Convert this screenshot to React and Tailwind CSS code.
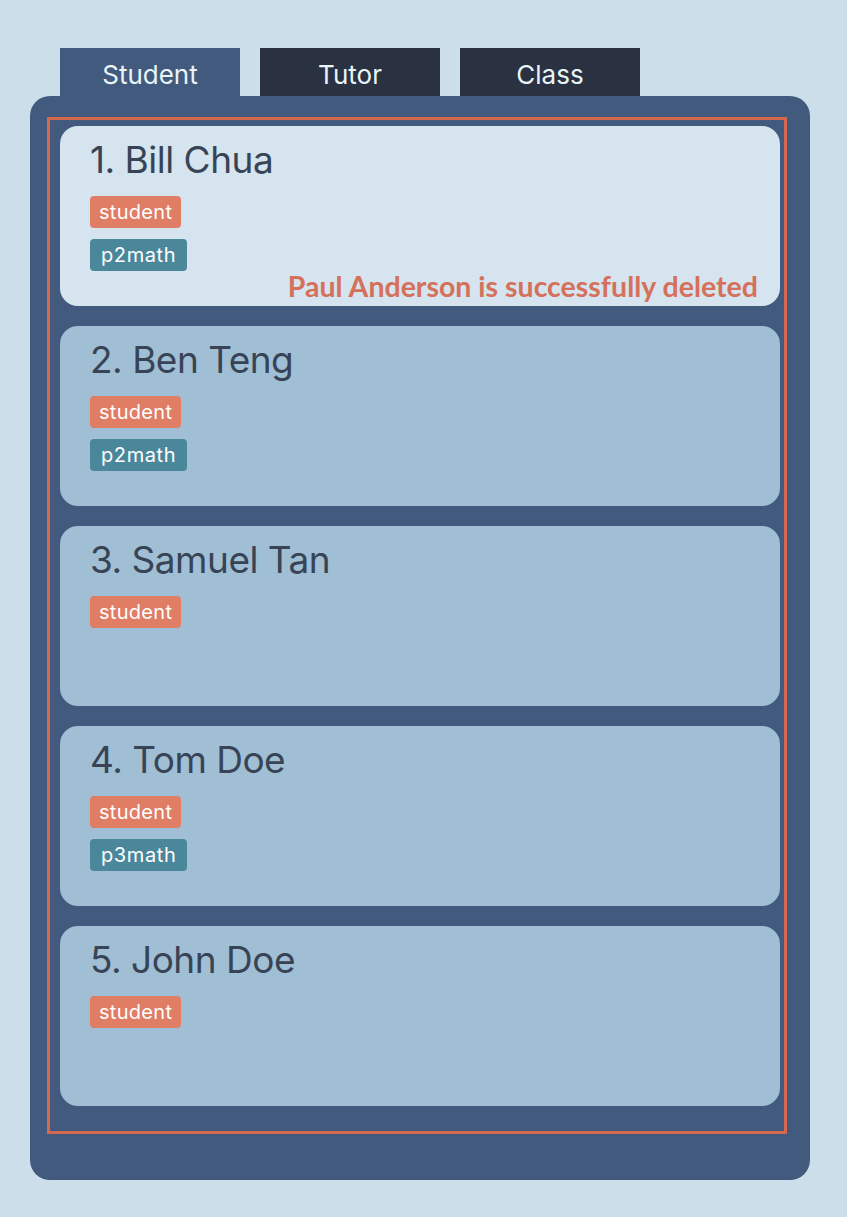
import React from "react";

const people = [
  { name: "1. Bill Chua", tags: ["p2math"], selected: true },
  { name: "2. Ben Teng", tags: ["p2math"] },
  { name: "3. Samuel Tan", tags: [] },
  { name: "4. Tom Doe", tags: ["p3math"] },
  { name: "5. John Doe", tags: [] },
];

function Card({ p }) {
  return (
    <div
      className={`relative h-[180px] rounded-[18px] pl-[30px] pt-[12px] ${
        p.selected ? "bg-[#d5e4ee]" : "bg-[#a0bfd4]"
      }`}
    >
      <div className="text-[37px] leading-[44px] text-[#384456] tracking-[-0.5px]">{p.name}</div>
      <div className="mt-[14px] flex flex-col items-start gap-[11px]">
        <span className="h-[32px] rounded-[4px] bg-[#e07d65] px-[9px] text-[20px] leading-[32px] tracking-[0.3px] text-white">
          student
        </span>
        {p.tags.map((t) => (
          <span
            key={t}
            className="h-[32px] rounded-[4px] bg-[#4b879b] px-[11px] text-[20px] leading-[32px] tracking-[0.6px] text-white"
          >
            {t}
          </span>
        ))}
      </div>
      {p.selected && (
        <div
          className="absolute right-[22px] bottom-[3px] text-[28.5px] font-bold leading-[34px] text-[#d5705a]"
          style={{ fontFamily: "Lato, sans-serif" }}
        >
          Paul Anderson is successfully deleted
        </div>
      )}
    </div>
  );
}

export default function App() {
  return (
    <div
      className="min-h-[1217px] w-full bg-[#cbdeea] pl-[30px] pr-[37px] pt-[48px]"
      style={{ fontFamily: "Inter, 'Noto Sans', sans-serif" }}
    >
      <div className="flex gap-[20px] pl-[30px]">
        {["Student", "Tutor", "Class"].map((t, i) => (
          <div
            key={t}
            className={`flex h-[48px] w-[180px] items-center justify-center pt-[4px] text-[26px] text-[#e8f4f8] ${
              i === 0 ? "bg-[#415a7e]" : "bg-[#2a3140]"
            }`}
          >
            {t}
          </div>
        ))}
      </div>
      <div className="rounded-b-[20px] rounded-tr-[20px] rounded-tl-[20px] bg-[#415a7e] pl-[17px] pr-[23px] pt-[21px] pb-[46px]">
        <div className="border-[3px] border-[#d5694f] pl-[10px] pr-[4px] pt-[6px] pb-[25px]">
          <div className="flex flex-col gap-[20px]">
            {people.map((p) => (
              <Card key={p.name} p={p} />
            ))}
          </div>
        </div>
      </div>
    </div>
  );
}
